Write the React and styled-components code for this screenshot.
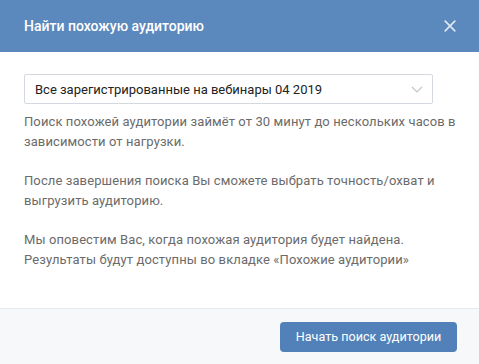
import React from 'react'
import styled, { createGlobalStyle } from 'styled-components'

const Global = createGlobalStyle`
    body {
        margin: 0;
        background: #fff;
        font-family: Roboto, "Liberation Sans", Arial, sans-serif;
    }
`

const App = () => {
    return (
        <>
            <Global />
            <Modal>
                <Header>
                    <Title>Найти похожую аудиторию</Title>
                    <Close aria-label="Закрыть">
                        <svg width="12" height="12" viewBox="0 0 12 12">
                            <path d="M1.2 1.2 L10.8 10.8 M10.8 1.2 L1.2 10.8" stroke="#fff" strokeWidth="1.7" strokeLinecap="round" opacity="0.8" />
                        </svg>
                    </Close>
                </Header>
                <Body>
                    <Select>
                        <span>Все зарегистрированные на вебинары 04 2019</span>
                        <svg width="12" height="7" viewBox="0 0 12 7">
                            <path d="M1 1 L6 6 L11 1" stroke="#c0c7cf" strokeWidth="1.2" fill="none" />
                        </svg>
                    </Select>
                    <Text>Поиск похожей аудитории займёт от 30 минут до нескольких часов в зависимости от нагрузки.</Text>
                    <Text>После завершения поиска Вы сможете выбрать точность/охват и выгрузить аудиторию.</Text>
                    <Text>Мы оповестим Вас, когда похожая аудитория будет найдена.<br />Результаты будут доступны во вкладке «Похожие аудитории»</Text>
                </Body>
                <Footer>
                    <Btn>Начать поиск аудитории</Btn>
                </Footer>
            </Modal>
        </>
    )
}

const Modal = styled.div`
    width: 479px;
    height: 364px;
    display: flex;
    flex-direction: column;
    background: #fff;
`
const Header = styled.div`
    height: 52px;
    flex-shrink: 0;
    background: #5b88bd;
    display: flex;
    align-items: center;
    justify-content: space-between;
    padding: 0 22px 0 24px;
`
const Title = styled.div`
    color: #fff;
    font-size: 14px;
    font-weight: 500;
`
const Close = styled.button`
    background: none;
    border: none;
    padding: 0;
    width: 14px;
    height: 14px;
    display: flex;
    align-items: center;
    justify-content: center;
`
const Body = styled.div`
    flex: 1;
    padding: 22px 20px 0 24px;
    display: flex;
    flex-direction: column;
`
const Select = styled.div`
    width: 409px;
    height: 30px;
    box-sizing: border-box;
    border: 1px solid #d3d9de;
    border-radius: 2px;
    display: flex;
    align-items: center;
    justify-content: space-between;
    padding: 0 9px 0 10px;
    font-size: 13px;
    color: #222;
    margin-bottom: 8px;
`
const Text = styled.p`
    margin: 0 0 19px;
    font-size: 13px;
    line-height: 20px;
    letter-spacing: 0.1px;
    color: #6b6b6b;
`
const Footer = styled.div`
    height: 56px;
    flex-shrink: 0;
    box-sizing: border-box;
    border-top: 1px solid #e7e8ec;
    background: #f7f8fa;
    display: flex;
    align-items: center;
    justify-content: flex-end;
    padding: 0 22px;
`
const Btn = styled.button`
    background-color: #5181b8;
    border: none;
    border-radius: 4px;
    color: #fff;
    width: 177px;
    height: 30px;
    padding: 0;
    font-family: inherit;
    font-size: 12.6px;
`

export default App
